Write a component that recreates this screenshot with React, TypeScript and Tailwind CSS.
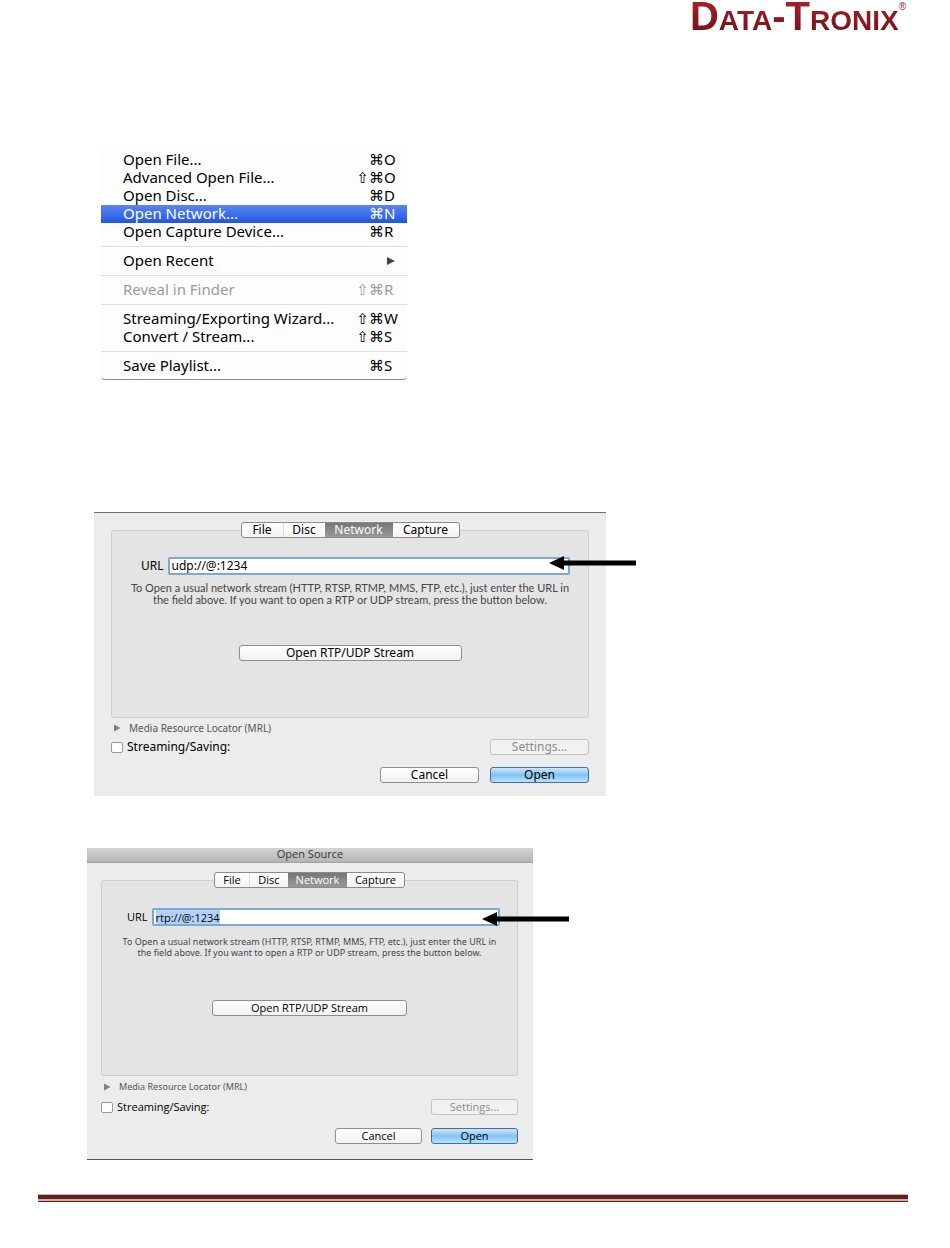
import React, { useEffect, useRef, useState } from "react";
import clsx from "clsx";

interface MenuEntry {
  label: string;
  modifiers?: string;
  letter?: string;
  submenu?: boolean;
  active?: boolean;
  disabled?: boolean;
}

const MENU_GROUPS: MenuEntry[][] = [
  [
    { label: "Open File...", modifiers: "⌘", letter: "O" },
    { label: "Advanced Open File...", modifiers: "⇧⌘", letter: "O" },
    { label: "Open Disc...", modifiers: "⌘", letter: "D" },
    { label: "Open Network...", modifiers: "⌘", letter: "N", active: true },
    { label: "Open Capture Device...", modifiers: "⌘", letter: "R" },
  ],
  [{ label: "Open Recent", submenu: true }],
  [{ label: "Reveal in Finder", modifiers: "⇧⌘", letter: "R", disabled: true }],
  [
    { label: "Streaming/Exporting Wizard...", modifiers: "⇧⌘", letter: "W" },
    { label: "Convert / Stream...", modifiers: "⇧⌘", letter: "S" },
  ],
  [{ label: "Save Playlist...", modifiers: "⌘", letter: "S" }],
];

const TABS = ["File", "Disc", "Network", "Capture"];

// "wide" is the sheet without a title bar, "compact" the titled window
const SIZES = {
  wide: {
    window: "max-w-[512px] border-t border-[#6f6f6f] pb-[13px]",
    body: "px-[17px]",
    tabs: ["w-[41px]", "w-[42px]", "w-[68px]", "w-[66px]"],
    text: "text-[12px]",
    hint: "font-['Lato',sans-serif] text-[11px] leading-3",
    form: "pt-[19px] pb-[56px]",
    field: "pl-[29px] pr-[18px]",
    hintGap: "mt-[7px]",
    stream: "mt-[39px] w-[223px]",
    mrl: "text-[10px] mt-0.5",
    saving: "mt-[3px]",
    actions: "mt-3",
    button: "w-[99px]",
    arrow: "-top-px -right-[66px]",
  },
  compact: {
    window: "max-w-[446px] border-b border-[#555] pb-[15px]",
    body: "pr-[15px] pl-[14px]",
    tabs: ["w-[34px]", "w-[39px]", "w-[59px]", "w-[57px]"],
    text: "font-['Open_Sans','DejaVu_Sans',sans-serif] text-[11px]",
    hint: "font-['Noto_Sans',sans-serif] text-[9px] leading-[11px]",
    form: "pt-5 pb-[59px]",
    field: "pl-[25px] pr-[17px]",
    hintGap: "mt-2.5",
    stream: "mt-[42px] w-[195px]",
    mrl: "font-['Noto_Sans',sans-serif] text-[9px] mt-[3px]",
    saving: "mt-1",
    actions: "mt-[13px]",
    button: "w-[87px]",
    arrow: "top-1 -right-[69px]",
  },
};

const Logo: React.FC = () => (
  <div className="mr-0.5 flex items-start font-['Liberation_Sans',Arial,sans-serif] text-[#9a2026]">
    <div className="flex h-[34px] items-baseline bg-linear-to-b from-[#a3242a] to-[#74121a] bg-clip-text text-[28px] leading-[33px] font-bold text-transparent">
      <span className="text-[40px]">D</span>
      <span>ATA</span>
      <span className="text-[40px]">-T</span>
      <span>RONIX</span>
    </div>
    <sup className="top-0 pt-px text-[10px] leading-3">®</sup>
  </div>
);

const FileMenu: React.FC = () => (
  <div className="w-full max-w-[306px] rounded-b-sm border-b border-[#8e8e8e] bg-[#fdfdfd] pt-[3px] pb-1 text-[15px] leading-4">
    {MENU_GROUPS.map((group, i) => (
      <div key={i}>
        {i > 0 && <hr className="my-[5px] border-[#dedede]" />}
        {group.map((entry) => (
          <button
            key={entry.label}
            type="button"
            disabled={entry.disabled}
            className={clsx(
              "flex h-[18px] w-full items-center justify-between pr-[11px] pb-0.5 pl-[22px]",
              entry.active && "bg-linear-to-b from-[#5b85ee] to-[#1f55e4] text-white",
              entry.disabled && "text-[#9b9b9b]"
            )}
          >
            <span>{entry.label}</span>
            {entry.submenu ? (
              <svg className="mt-0.5 size-2.5" viewBox="0 0 10 10" aria-hidden="true">
                <path d="M1 1 L9 5 L1 9 Z" fill="#444" />
              </svg>
            ) : (
              <span className="flex">
                <span>{entry.modifiers}</span>
                <span className="w-3 text-left">{entry.letter}</span>
              </span>
            )}
          </button>
        ))}
      </div>
    ))}
  </div>
);

const Arrow: React.FC<{ className: string }> = ({ className }) => (
  <svg
    className={clsx("absolute h-4 w-[87px]", className)}
    viewBox="0 0 87 16"
    aria-hidden="true"
  >
    <path d="M0 7 L15 0 V4.5 H87 V9.5 H15 V14 Z" fill="#000" />
  </svg>
);

interface PushButtonProps {
  className: string;
  primary?: boolean;
  disabled?: boolean;
  children: React.ReactNode;
}

const PushButton: React.FC<PushButtonProps> = ({ className, primary, disabled, children }) => (
  <button
    type="button"
    disabled={disabled}
    className={clsx(
      "flex h-4 items-center justify-center rounded-[3px] border",
      primary && "border-[#4a6a9c] bg-linear-to-b from-[#cfe6fb] via-[#84c1f4] to-[#b5e6ff]",
      disabled && "border-[#c2c2c2] bg-[#f1f1f1] text-[#8d8d8d]",
      !primary && !disabled && "border-[#8f8f8f] bg-linear-to-b from-white to-[#f1f1f1]",
      className
    )}
  >
    {children}
  </button>
);

interface OpenDialogProps {
  size: "wide" | "compact";
  title?: string;
  initialUrl: string;
  selected?: boolean;
}

const OpenDialog: React.FC<OpenDialogProps> = ({ size, title, initialUrl, selected }) => {
  const s = SIZES[size];
  const [tab, setTab] = useState("Network");
  const [url, setUrl] = useState(initialUrl);
  const inputRef = useRef<HTMLInputElement>(null);

  useEffect(() => {
    if (selected) inputRef.current?.select();
  }, [selected]);

  return (
    <section className={clsx("w-full bg-[#ececec]", s.window, s.text)}>
      {title && (
        <h2 className="flex h-[15px] items-center justify-center border-b border-[#a2a2a2] bg-linear-to-b from-[#d4d4d4] to-[#b4b4b4] pb-0.5 text-[#333]">
          {title}
        </h2>
      )}
      <div className={clsx("pt-[9px]", s.body)}>
        <fieldset className="rounded-[3px] border border-[#cfcfcf] bg-[#e4e4e4]">
          <legend className="mx-auto flex h-4 overflow-hidden rounded-[3px] border border-[#8a8a8a] bg-linear-to-b from-white to-[#f3f3f3]">
            {TABS.map((name, i) => (
              <button
                key={name}
                type="button"
                aria-pressed={tab === name}
                onClick={() => setTab(name)}
                className={clsx(
                  "flex items-center justify-center",
                  s.tabs[i],
                  tab === name ? "bg-linear-to-b from-[#777] to-[#999] text-white" : i === 1 && "border-l border-[#ddd]"
                )}
              >
                {name}
              </button>
            ))}
          </legend>
          <div className={s.form}>
            <div className={clsx("flex items-center gap-1", s.field)}>
              <label htmlFor={`${size}-url`}>URL</label>
              <div className="relative flex-1">
                <input
                  ref={inputRef}
                  id={`${size}-url`}
                  type="text"
                  value={url}
                  onChange={(e) => setUrl(e.target.value)}
                  className="block h-[18px] w-full rounded-xs border-2 border-[#7aa9d2] bg-white px-0.5 outline-none selection:bg-[#b0d2f9] selection:text-black"
                />
                <Arrow className={s.arrow} />
              </div>
            </div>
            <p className={clsx("text-center whitespace-nowrap text-[#444]", s.hint, s.hintGap)}>
              To Open a usual network stream (HTTP, RTSP, RTMP, MMS, FTP, etc.), just enter the URL in
              <br />
              the field above. If you want to open a RTP or UDP stream, press the button below.
            </p>
            <PushButton className={clsx("mx-auto", s.stream)}>Open RTP/UDP Stream</PushButton>
          </div>
        </fieldset>
        <button type="button" className={clsx("flex h-4 items-center gap-2 pl-0.5 text-[#555]", s.mrl)}>
          <svg className="size-2" viewBox="0 0 8 8" aria-hidden="true">
            <path d="M1 0.5 L7.5 4 L1 7.5 Z" fill="#808080" />
          </svg>
          Media Resource Locator (MRL)
        </button>
        <div className={clsx("flex items-center justify-between", s.saving)}>
          <label className="flex h-4 items-center gap-1">
            <input
              type="checkbox"
              className="h-[11px] w-3 appearance-none rounded-xs border border-[#999] bg-white"
            />
            Streaming/Saving:
          </label>
          <PushButton className={s.button} disabled>
            Settings...
          </PushButton>
        </div>
        <div className={clsx("flex justify-end", size === "wide" ? "gap-[11px]" : "gap-[9px]", s.actions)}>
          <PushButton className={s.button}>Cancel</PushButton>
          <PushButton className={s.button} primary>
            Open
          </PushButton>
        </div>
      </div>
    </section>
  );
};

export default function App() {
  return (
    <div className="min-h-screen bg-white pr-[42px] pl-[38px] font-['Noto_Sans','DejaVu_Sans',sans-serif] text-black">
      <header className="flex h-[148px] justify-end">
        <Logo />
      </header>
      <main className="pb-[34px]">
        <div className="pl-[63px]">
          <FileMenu />
        </div>
        <div className="mt-[132px] pl-[56px]">
          <OpenDialog size="wide" initialUrl="udp://@:1234" />
        </div>
        <div className="mt-[52px] pl-[49px]">
          <OpenDialog size="compact" title="Open Source" initialUrl="rtp://@:1234" selected />
        </div>
      </main>
      <footer className="border-t border-[#d9a9a9]">
        <div className="h-1 bg-[#5a2420]" />
        <div className="h-[3px] border-b border-[#5a2420] bg-[#d9a9a9]" />
      </footer>
    </div>
  );
}
